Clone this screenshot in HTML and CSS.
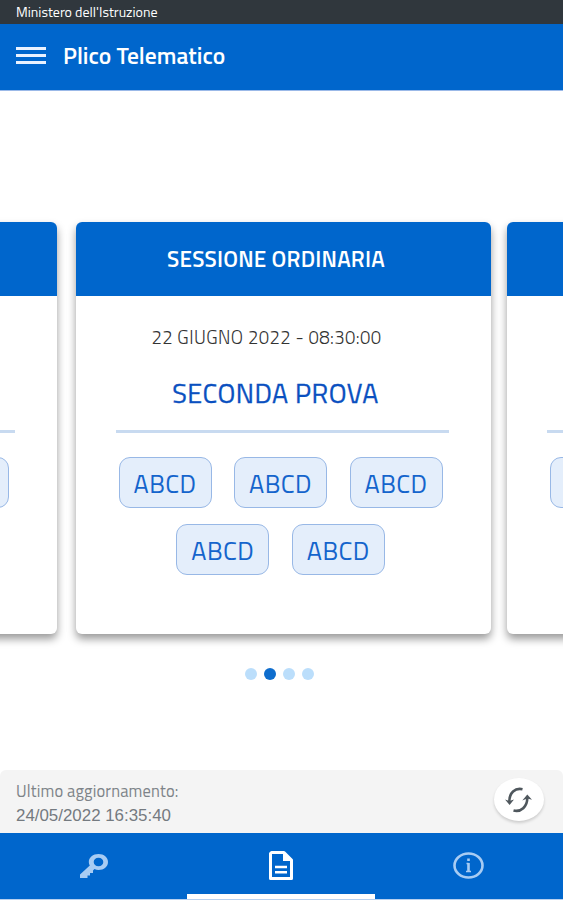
FILE: index.html
```html
<!DOCTYPE html>
<html lang="it">
<head>
    <meta charset="UTF-8">
    <meta name="viewport" content="width=device-width, initial-scale=1.0">
    <title>Plico Telematico</title>
    <link rel="stylesheet" href="styles.css">
</head>
<body>
    <div class="ministry"><span>Ministero dell'Istruzione</span></div>
    <header>
        <button class="menu" aria-label="Menu"><i></i><i></i><i></i></button>
        <h1>Plico Telematico</h1>
    </header>

    <main>
        <div class="carousel">
            <section class="card">
                <div class="card-head"></div>
                <div class="card-body">
                    <p class="date"></p>
                    <h3></h3>
                    <hr>
                    <div class="codes">
                        <span class="code"></span>
                        <span class="code"></span>
                        <span class="code"></span>
                    </div>
                </div>
            </section>
            <section class="card current">
                <div class="card-head"><h2>SESSIONE ORDINARIA</h2></div>
                <div class="card-body">
                    <p class="date"><span>22 GIUGNO 2022 - 08:30:00</span></p>
                    <h3>SECONDA PROVA</h3>
                    <hr>
                    <div class="codes">
                        <span class="code">ABCD</span>
                        <span class="code">ABCD</span>
                        <span class="code">ABCD</span>
                        <span class="code">ABCD</span>
                        <span class="code">ABCD</span>
                    </div>
                </div>
            </section>
            <section class="card">
                <div class="card-head"></div>
                <div class="card-body">
                    <p class="date"></p>
                    <h3></h3>
                    <hr>
                    <div class="codes">
                        <span class="code"></span>
                        <span class="code"></span>
                        <span class="code"></span>
                    </div>
                </div>
            </section>
        </div>
        <div class="dots">
            <i></i><i class="active"></i><i></i><i></i>
        </div>
    </main>

    <div class="update">
        <div class="update-text">
            <p class="update-label">Ultimo aggiornamento:</p>
            <p class="update-time">24/05/2022 16:35:40</p>
        </div>
        <button class="refresh" aria-label="Aggiorna">
            <svg width="28" height="26" viewBox="0 0 28 26" fill="none" stroke="#4f575d" stroke-width="2.6">
                <path d="M17.500 2.200C10 .5 4.300 6 4.300 14.500"/>
                <path fill="#4f575d" stroke="none" d="M0 12.500L4.300 14L9 12.500L4.600 18Z"/>
                <path d="M8.500 23.500C16 25.500 22.300 19.500 22.300 11"/>
                <path fill="#4f575d" stroke="none" d="M17.300 13.500L22.300 7.500L27 12.700L22.300 11.500Z"/>
            </svg>
        </button>
    </div>

    <nav>
        <a class="tab">
            <svg width="28" height="24" viewBox="0 0 28 24">
                <path fill="#a8ccf3" fill-rule="evenodd" d="M18.500 0C13 0 8.800 3.500 8.800 8C8.800 9.400 9.200 10.500 9.800 11.500L0 20.500V24H7.500V21.500H10V19H13V16.500L14.500 15C15.700 15.700 17 16 18.500 16C24 16 28 12.500 28 8S24 0 18.500 0ZM18.500 3.800C21.300 3.800 23.300 5.500 23.300 8S21.300 12.200 18.500 12.200S13.700 10.500 13.700 8S15.700 3.800 18.500 3.800Z"/>
            </svg>
        </a>
        <a class="tab selected">
            <svg width="24" height="29" viewBox="0 0 24 29" fill="none" stroke="#fff">
                <path stroke-width="3" stroke-linejoin="round" d="M2.500 1.500H15L22.500 9V27.500H1.500V2.500Z"/>
                <path fill="#fff" stroke="none" d="M14 1V10H23Z"/>
                <path stroke-width="2.600" d="M6 16H18M6 21.300H18"/>
            </svg>
        </a>
        <a class="tab">
            <svg width="31" height="27" viewBox="0 0 31 27" fill="none" stroke="#a8ccf3">
                <ellipse cx="15.500" cy="13.500" rx="14" ry="12" stroke-width="2.600"/>
                <path stroke-width="2.600" d="M15.500 11V20M15.500 6.500V9"/>
                <path stroke-width="1.300" d="M13.500 11.500H15.500M13 19.500H18"/>
            </svg>
        </a>
    </nav>
</body>
</html>
```

FILE: styles.css
```css
* {
    box-sizing: border-box;
}
body {
    margin: 0;
    height: 900px;
    display: flex;
    flex-direction: column;
    overflow: hidden;
    background-color: #fff;
    font-family: 'Titillium Web', 'Open Sans', sans-serif;
}
h1, h2, h3, p {
    margin: 0;
}
button {
    border: none;
    padding: 0;
    background: none;
}
.ministry {
    height: 24px;
    padding-left: 16px;
    background-color: #30373d;
    color: #fff;
    font-size: 14px;
    line-height: 24px;
}
header {
    display: flex;
    align-items: center;
    gap: 17px;
    height: 67px;
    padding: 0 16px 4px;
    border-bottom: 1px solid #9bb9e8;
    background-color: #0066cc;
    color: #fff;
}
.menu {
    display: flex;
    flex-direction: column;
    gap: 4px;
    width: 30px;
}
.menu i {
    height: 3px;
    background-color: #e9f2ff;
}
h1 {
    font-size: 23.5px;
    font-weight: 600;
}
main {
    flex: 1;
    padding-top: 131px;
}
.carousel {
    display: flex;
    justify-content: center;
    overflow-x: clip;
}
.card {
    flex: none;
    width: 415px;
    height: 412px;
    border-radius: 6px;
    background-color: #fff;
    box-shadow: 0 5px 8px rgba(0, 0, 0, 0.4);
}
.current {
    margin: 0 16px 0 19px;
}
.card-head {
    display: flex;
    align-items: center;
    justify-content: center;
    height: 74px;
    padding: 0 14px 1px 0;
    border-radius: 6px 6px 0 0;
    background-color: #0066cc;
    color: #fff;
}
h2 {
    font-size: 22.5px;
    font-weight: 600;
    letter-spacing: 0.2px;
}
.card-body {
    padding: 27px 42px 0 40px;
    text-align: center;
}
.date {
    height: 28px;
    padding-right: 31px;
    color: #333;
    font-size: 18.5px;
    font-weight: 300;
    letter-spacing: 0.4px;
    line-height: 28px;
    white-space: nowrap;
}
h3 {
    height: 40px;
    margin-top: 22px;
    padding-right: 13px;
    color: #0a50c0;
    font-size: 27px;
    font-weight: 500;
    letter-spacing: 0.5px;
    line-height: 40px;
    -webkit-text-stroke: 0.3px #0a50c0;
}
hr {
    height: 3px;
    margin: 17px 0 24px;
    border: none;
    background-color: #c8daf0;
}
.codes {
    display: flex;
    flex-wrap: wrap;
    justify-content: center;
    gap: 16px 22.5px;
    margin-right: 3px;
}
.code {
    width: 93px;
    height: 51px;
    border: 1px solid #98b8e6;
    border-radius: 11px;
    background-color: #e4eefb;
    color: #1464cc;
    font-size: 25.5px;
    letter-spacing: 0.4px;
    line-height: 51px;
}
.dots {
    display: flex;
    justify-content: center;
    gap: 7px;
    margin-top: 34px;
    padding-right: 4px;
}
.dots i {
    width: 12px;
    height: 12px;
    border-radius: 50%;
    background-color: #bbdefb;
}
.dots .active {
    background-color: #0e6dcd;
}
.update {
    display: flex;
    align-items: center;
    justify-content: space-between;
    height: 63px;
    padding: 0 19px 0 16px;
    border-radius: 6px 6px 0 0;
    background-color: #f4f4f4;
}
.update-text {
    padding-top: 2px;
}
.update p {
    height: 25px;
    line-height: 25px;
}
.update-label {
    color: #7d8388;
    font-size: 16.5px;
    letter-spacing: 0.15px;
}
.update-time {
    color: #747a80;
    font-family: 'Liberation Sans', Arial, sans-serif;
    font-size: 16.9px;
}
.refresh {
    display: flex;
    align-items: center;
    justify-content: center;
    width: 50px;
    height: 43px;
    margin-bottom: 4px;
    border-radius: 50%;
    background-color: #fff;
    box-shadow: 0 2px 3px rgba(0, 0, 0, 0.16);
}
nav {
    display: flex;
    height: 67px;
    padding-right: 1px;
    border-bottom: 1px solid #b7d0ef;
    background-color: #0066cc;
}
.tab {
    display: flex;
    flex: 1;
    align-items: center;
    justify-content: center;
    padding-top: 4px;
    border-bottom: 5px solid transparent;
}
.selected {
    border-bottom-color: #fff;
}
```
